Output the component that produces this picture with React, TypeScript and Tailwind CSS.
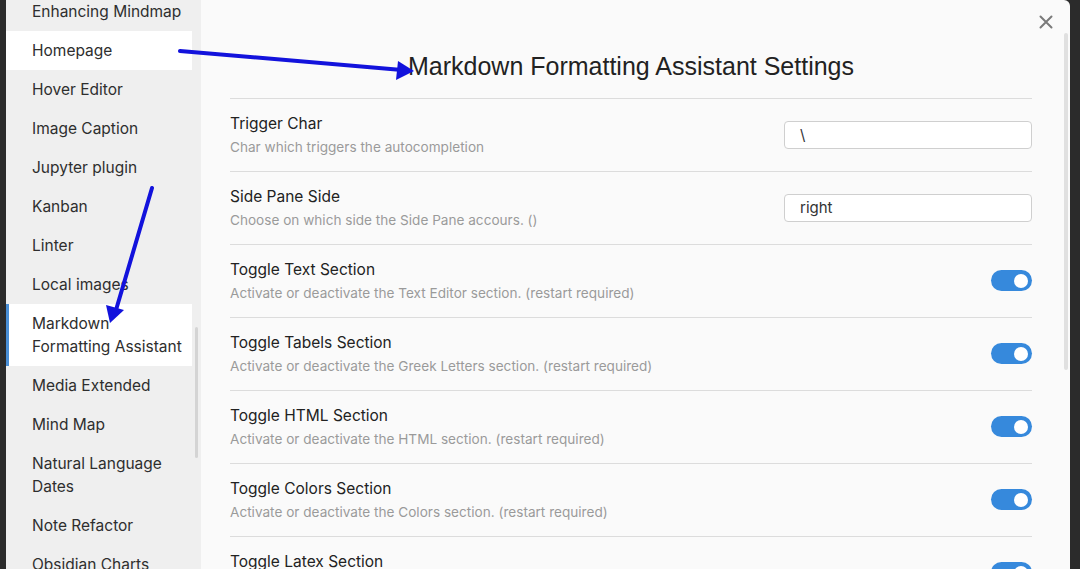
import React from "react";

const items: { label: React.ReactNode; state?: "hover" | "active" }[] = [
  { label: "Enhancing Mindmap" },
  { label: "Homepage", state: "hover" },
  { label: "Hover Editor" },
  { label: "Image Caption" },
  { label: "Jupyter plugin" },
  { label: "Kanban" },
  { label: "Linter" },
  { label: "Local images" },
  { label: (<>Markdown<br />Formatting Assistant</>), state: "active" },
  { label: "Media Extended" },
  { label: "Mind Map" },
  { label: (<>Natural Language<br />Dates</>) },
  { label: "Note Refactor" },
  { label: "Obsidian Charts" },
  { label: "Obsidian Git" },
];

const rows: { name: string; desc: string; kind: "input" | "toggle"; value?: string }[] = [
  { name: "Trigger Char", desc: "Char which triggers the autocompletion", kind: "input", value: "\\" },
  { name: "Side Pane Side", desc: "Choose on which side the Side Pane accours. ()", kind: "input", value: "right" },
  { name: "Toggle Text Section", desc: "Activate or deactivate the Text Editor section. (restart required)", kind: "toggle" },
  { name: "Toggle Tabels Section", desc: "Activate or deactivate the Greek Letters section. (restart required)", kind: "toggle" },
  { name: "Toggle HTML Section", desc: "Activate or deactivate the HTML section. (restart required)", kind: "toggle" },
  { name: "Toggle Colors Section", desc: "Activate or deactivate the Colors section. (restart required)", kind: "toggle" },
  { name: "Toggle Latex Section", desc: "Activate or deactivate the Latex section. (restart required)", kind: "toggle" },
];

function Toggle() {
  return (
    <div className="flex h-[21px] w-[41px] items-center justify-end rounded-full bg-[#3689dc] pr-[4px]">
      <div className="h-[14px] w-[14px] rounded-full bg-white" />
    </div>
  );
}

export default function App() {
  return (
    <div className="relative h-[569px] w-[1080px] overflow-hidden bg-[#2b2b2b]" style={{ fontFamily: "Inter, 'Noto Sans', sans-serif" }}>
      <div className="ml-[6px] flex h-[569px] w-[1064px] overflow-hidden rounded-tr-[6px] bg-[#fafafa]">
        {/* sidebar */}
        <div className="relative flex w-[195px] shrink-0 bg-[#efefef]">
          <div className="-mt-[8px] flex w-[186px] flex-col">
            {items.map((it, i) => (
              <div
                key={i}
                className={
                  "py-[8px] text-[15.5px] leading-[23px] text-[#2e2e2e] " +
                  (it.state === "hover" ? "bg-white pl-[26px]" : it.state === "active" ? "border-l-[3px] border-[#4a8fd6] bg-white pl-[23px]" : "pl-[26px]")
                }
              >
                {it.label}
              </div>
            ))}
          </div>
          <div className="absolute left-[189px] top-[327px] h-[131px] w-[3px] rounded-full bg-[#d4d4d4]" />
        </div>
        {/* main */}
        <div className="relative flex-1 pl-[29px] pr-[32px] pt-[52px]">
          <div className="absolute right-[17px] top-[15px] text-[#7a7a7a]">
            <svg width="14" height="14" viewBox="0 0 14 14" fill="none" stroke="currentColor" strokeWidth="2" strokeLinecap="round">
              <path d="M1.5 1.5 L12.5 12.5 M12.5 1.5 L1.5 12.5" />
            </svg>
          </div>
          <div className="absolute right-[2px] top-[33px] h-[337px] w-[4px] rounded-full bg-[#e0e0e0]" />
          <div className="flex w-[802px] flex-col">
            <div className="text-center text-[25px] leading-[28px] text-[#222]" style={{ fontFamily: "'Liberation Sans', Arial, sans-serif" }}>
              Markdown Formatting Assistant Settings
            </div>
            <div className="mt-[18px] border-t border-[#dcdcdc]" />
            {rows.map((r, i) => (
              <div key={i} className="flex items-center border-b border-[#dcdcdc] pb-[15px] pt-[14px]">
                <div className="flex flex-1 flex-col">
                  <div className="text-[15.5px] leading-[22px] text-[#222]">{r.name}</div>
                  <div className="mt-[3px] text-[13.6px] leading-[18px] text-[#9a9a9a]">{r.desc}</div>
                </div>
                {r.kind === "input" ? (
                  <div className="flex h-[28px] w-[248px] items-center rounded-[4px] border border-[#cfcfcf] bg-white pl-[15px] pt-[2px] text-[15px] text-[#333]">
                    {r.value}
                  </div>
                ) : (
                  <Toggle />
                )}
              </div>
            ))}
          </div>
        </div>
      </div>
      {/* annotation arrows */}
      <svg className="pointer-events-none absolute left-0 top-0" width="1080" height="569" viewBox="0 0 1080 569">
        <line x1="180" y1="51" x2="402" y2="70" stroke="#1212dc" strokeWidth="4" strokeLinecap="round" />
        <polygon points="414,71 398,61 396,80" fill="#1212dc" />
        <line x1="152" y1="188" x2="116" y2="310" stroke="#1212dc" strokeWidth="4" strokeLinecap="round" />
        <polygon points="110,323 106,305 124,310" fill="#1212dc" />
      </svg>
    </div>
  );
}
